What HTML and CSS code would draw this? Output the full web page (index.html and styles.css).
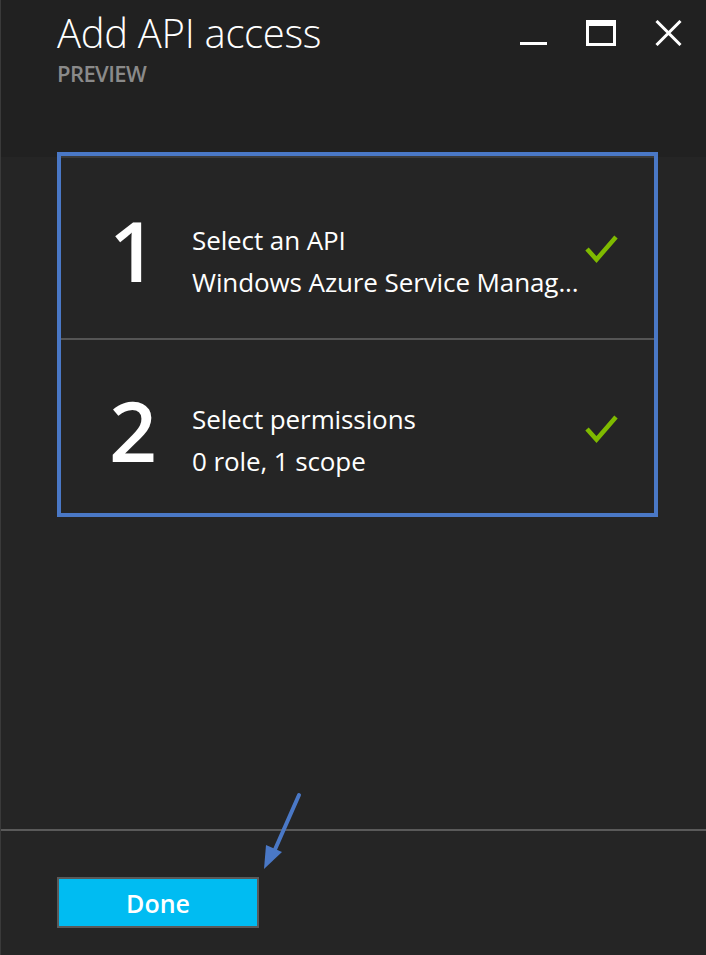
FILE: index.html
```html
<!DOCTYPE html>
<html>
<head>
<meta charset="utf-8">
<link rel="stylesheet" href="styles.css">
</head>
<body>
<div class="blade">
  <header class="head">
    <div class="titles">
      <h1 class="title">Add API access</h1>
      <div class="subtitle">PREVIEW</div>
    </div>
    <div class="controls">
      <svg class="ctl" width="27" height="26" viewBox="0 0 27 26"><rect x="0" y="22" width="27" height="3" fill="#fff"/></svg>
      <svg class="ctl" width="30" height="26" viewBox="0 0 30 26"><rect x="1.5" y="1.5" width="27" height="23" fill="none" stroke="#fff" stroke-width="3"/><rect x="0" y="0" width="30" height="6" fill="#fff"/></svg>
      <svg class="ctl" width="27" height="26" viewBox="0 0 27 26"><path d="M1.5 1 L25.5 25 M25.5 1 L1.5 25" stroke="#fff" stroke-width="3" fill="none"/></svg>
    </div>
  </header>
  <main class="content">
    <section class="steps">
      <div class="step">
        <div class="num">1</div>
        <div class="info">
          <div class="line">Select an API</div>
          <div class="line">Windows Azure Service Manag...</div>
        </div>
        <svg class="check" width="33" height="28" viewBox="0 0 33 28"><path d="M2 14 L11.5 24.5 L31 2" fill="none" stroke="#7fba00" stroke-width="4.5"/></svg>
      </div>
      <div class="step">
        <div class="num">2</div>
        <div class="info">
          <div class="line">Select permissions</div>
          <div class="line">0 role, 1 scope</div>
        </div>
        <svg class="check" width="33" height="28" viewBox="0 0 33 28"><path d="M2 14 L11.5 24.5 L31 2" fill="none" stroke="#7fba00" stroke-width="4.5"/></svg>
      </div>
    </section>
  </main>
  <footer class="foot">
    <button class="done">Done</button>
  </footer>
  <svg class="arrow" width="60" height="90" viewBox="0 0 60 90"><path d="M46 5 L20 64" stroke="#4a78c6" stroke-width="4" stroke-linecap="round" fill="none"/><path d="M11 79 L13 55 L29 62 Z" fill="#4a78c6"/></svg>
</div>
</body>
</html>
```
FILE: styles.css
```css
html, body {
  margin: 0;
  padding: 0;
}
body {
  background: #252525;
  font-family: "Open Sans", "Noto Sans", sans-serif;
  color: #fff;
}
.blade {
  position: relative;
  width: 706px;
  height: 955px;
  display: flex;
  flex-direction: column;
  background: #252525;
  border-left: 1px solid #3a3a3a;
  box-sizing: border-box;
}
.head {
  height: 157px;
  flex: none;
  background: #212121;
  display: flex;
  justify-content: space-between;
  align-items: flex-start;
  padding: 0 24px 0 56px;
  box-sizing: border-box;
}
.title {
  margin: 5px 0 0;
  font-size: 40px;
  font-weight: 300;
  line-height: 55px;
  letter-spacing: -0.3px;
}
.subtitle {
  margin-top: 0;
  font-size: 22px;
  font-weight: 600;
  color: #8a8a8a;
  line-height: 26px;
  letter-spacing: -0.6px;
}
.controls {
  display: flex;
  gap: 39px;
  margin-top: 20px;
}
.content {
  flex: 1;
  padding: 0 48px 0 56px;
}
.steps {
  margin-top: -5px;
  border: 4px solid #4a78c6;
  background: #252525;
  box-shadow: inset 0 2px 0 #3a3a3a;
}
.step {
  box-sizing: border-box;
  height: 182px;
  display: flex;
  align-items: center;
  padding: 0 36px 0 48px;
}
.step + .step {
  border-top: 2px solid #555;
  height: 175px;
}
.num {
  width: 83px;
  font-size: 84px;
  line-height: 1;
  font-weight: 600;
  margin-top: 6px;
}
.info {
  flex: 1;
  font-size: 26px;
  line-height: 42px;
  padding-top: 27px;
  letter-spacing: -0.1px;
}
.check {
  margin-top: 4px;
}
.foot {
  height: 126px;
  flex: none;
  border-top: 2px solid #5a5a5a;
  padding: 46px 0 0 56px;
  box-sizing: border-box;
}
.done {
  width: 202px;
  height: 51px;
  background: #00bcf2;
  border: 2px solid #5a5a5a;
  color: #fff;
  font-family: "Open Sans", "Noto Sans", sans-serif;
  font-size: 25px;
  font-weight: 600;
  padding: 0;
}
.arrow {
  position: absolute;
  left: 252px;
  top: 790px;
}
```
